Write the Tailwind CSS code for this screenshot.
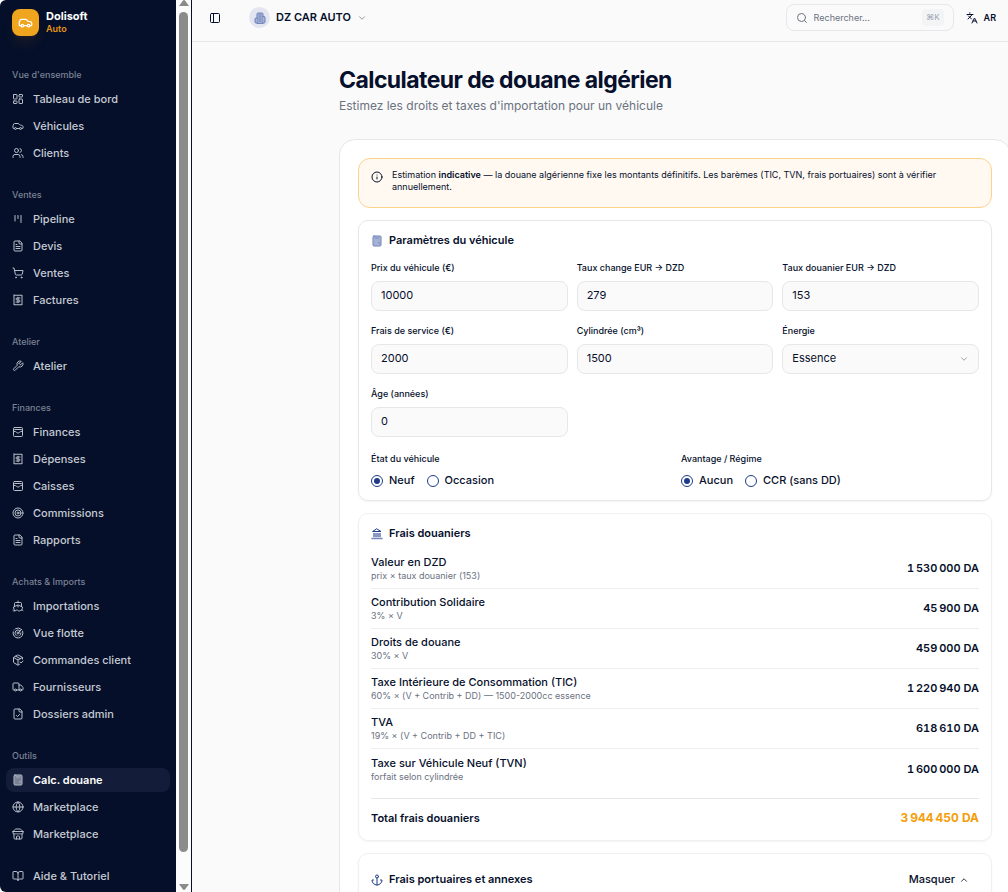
<!DOCTYPE html>
<html lang="fr">
<head>
    <meta charset="UTF-8">
    <meta name="viewport" content="width=device-width, initial-scale=1.0">
    <title>Dolisoft Auto - Calculateur de douane</title>
    <script src="https://cdn.jsdelivr.net/npm/@tailwindcss/browser@4"></script>
</head>
<body class="bg-[#fafafa] font-['Inter',sans-serif] text-[11px] leading-[15px] text-[#060f2b]">

    <div class="flex h-screen overflow-hidden">
        <aside class="flex w-48 shrink-0 border-r border-[#060f2b] bg-[#fcfcfc]">
            <div class="flex min-w-0 flex-1 flex-col gap-[18px] overflow-hidden rounded-l-md bg-[#050f2a] px-1.5">
                <a href="#" class="flex h-[45px] shrink-0 items-center gap-[7px] pl-1.5">
                    <span class="flex size-[27px] items-center justify-center rounded-lg bg-[#f0a51e] text-white shadow-lg shadow-[#f59e0b]/10">
                        <svg data-icon="car" class="size-[15px]"></svg>
                    </span>
                    <span class="flex flex-col">
                        <span class="leading-[13px] font-bold text-white">Dolisoft</span>
                        <span class="text-[9px] leading-3 font-semibold text-[#e5940f]">Auto</span>
                    </span>
                </a>
                <nav id="sidebar-nav" class="flex flex-col gap-[18px]"></nav>
            </div>
            <div class="flex w-[15px] shrink-0 flex-col items-center justify-between pb-0.5" aria-hidden="true">
                <svg viewBox="0 0 10 6" class="h-1.5 w-2.5 fill-[#8b8b8b]"><path d="M0 6 3.8.8q1.2-1.4 2.4 0L10 6z"/></svg>
                <div class="my-1.5 mb-8 w-[9px] flex-1 rounded-full bg-[#8b8b8b]"></div>
                <svg viewBox="0 0 10 6" class="h-1.5 w-2.5 fill-[#8b8b8b]"><path d="M0 0 3.8 5.2q1.2 1.4 2.4 0L10 0z"/></svg>
            </div>
        </aside>

        <div class="flex min-w-0 flex-1 flex-col">
            <header class="flex h-[42px] shrink-0 items-center justify-between border-b border-[#e5e7eb] pr-3 pb-1.5 pl-[17px]">
                <div class="flex items-center gap-7">
                    <button type="button" aria-label="Menu"><svg data-icon="panel" class="size-3"></svg></button>
                    <button type="button" class="flex items-center gap-1.5 font-semibold">
                        <span class="flex size-[21px] items-center justify-center rounded-full bg-[#e3e6f0] text-[#6b7fb8]">
                            <svg data-icon="building" class="size-3 fill-[#a9b5d8]"></svg>
                        </span>
                        DZ CAR AUTO
                        <svg data-icon="down" class="size-2.5 text-[#7b8294]"></svg>
                    </button>
                </div>
                <div class="flex items-center gap-3">
                    <label class="flex h-[27px] w-[168px] items-center gap-1.5 rounded-lg border border-[#e5e7eb] px-[9px] text-[#6b7280]">
                        <svg data-icon="search" class="size-3 shrink-0"></svg>
                        <input type="search" placeholder="Rechercher..." aria-label="Rechercher" class="w-0 flex-1 text-[9px] outline-none placeholder:text-[#6b7280]">
                        <kbd class="rounded bg-[#f3f4f6] px-1 py-px font-['Inter','DejaVu_Sans',sans-serif] text-[8px] text-[#9ca3af]">⌘K</kbd>
                    </label>
                    <button type="button" class="flex items-center gap-1.5 text-[9px] font-semibold">
                        <svg data-icon="languages" class="size-3"></svg>
                        AR
                    </button>
                </div>
            </header>

            <main class="flex-1 overflow-hidden pt-6 pl-[147px]">
                <h1 class="text-[23px] leading-7 font-bold tracking-tight">Calculateur de douane algérien</h1>
                <p class="mt-1 text-xs text-[#6b7280]">Estimez les droits et taxes d'importation pour un véhicule</p>

                <div class="mt-[25px] -mr-[3px] flex flex-col gap-3 rounded-2xl border border-[#e5e7eb] bg-white p-[18px]">
                    <div role="alert" class="flex gap-[9px] rounded-xl border border-[#fbd38a] bg-[#fff9f2] px-3 pt-2.5 pb-3.5 text-[9px] leading-3">
                        <svg data-icon="info" class="mt-0.5 size-3 shrink-0"></svg>
                        <p>Estimation <strong class="font-semibold">indicative</strong> — la douane algérienne fixe les montants définitifs. Les barèmes (TIC, TVN, frais portuaires) sont à vérifier annuellement.</p>
                    </div>

                    <section class="rounded-[10px] border border-[#e5e7eb] p-3 shadow-xs">
                        <h2 class="flex items-center gap-1.5 font-semibold">
                            <svg data-icon="calculator" class="size-3 fill-[#b4bfdd] text-[#6b7fb8]"></svg>
                            Paramètres du véhicule
                        </h2>
                        <div id="fields" class="mt-3.5 grid grid-cols-3 gap-x-[9px] gap-y-3.5"></div>
                        <div id="regimes" class="mt-4 grid grid-cols-2 gap-3"></div>
                    </section>

                    <section class="rounded-[10px] border border-[#f0f0f2] p-3 shadow-xs">
                        <h2 class="flex items-center gap-1.5 font-semibold">
                            <svg data-icon="landmark" class="size-3 text-[#1e3a8a]"></svg>
                            Frais douaniers
                        </h2>
                        <table class="mt-2 w-full border-separate border-spacing-0">
                            <tbody id="fees"></tbody>
                        </table>
                        <div class="mt-[9px] flex items-center justify-between border-t border-[#e5e7eb] pt-[9px] leading-5 font-semibold">
                            <span>Total frais douaniers</span>
                            <span class="text-xs leading-5 font-bold text-[#f59e0b] tabular-nums">3&#8239;944&#8239;450 DA</span>
                        </div>
                    </section>

                    <section class="rounded-[10px] border border-[#f0f0f2] p-3 shadow-xs">
                        <div class="flex h-[27px] items-center justify-between">
                            <h2 class="flex items-center gap-1.5 font-semibold">
                                <svg data-icon="anchor" class="size-3 text-[#1e3a8a]"></svg>
                                Frais portuaires et annexes
                            </h2>
                            <button type="button" class="flex items-center gap-1 pr-2.5 font-medium">
                                Masquer
                                <svg data-icon="up" class="size-2.5"></svg>
                            </button>
                        </div>
                    </section>
                </div>
            </main>
        </div>
    </div>

    <script>
        const icons = {
            dashboard: '<rect width="7" height="9" x="3" y="3" rx="1"/><rect width="7" height="5" x="14" y="3" rx="1"/><rect width="7" height="9" x="14" y="12" rx="1"/><rect width="7" height="5" x="3" y="16" rx="1"/>',
            car: '<path d="M19 17h2c.6 0 1-.4 1-1v-3c0-.9-.7-1.7-1.5-1.9C18.7 10.6 16 10 16 10s-1.3-1.4-2.2-2.3c-.5-.4-1.1-.7-1.8-.7H5c-.6 0-1.1.4-1.4.9l-1.4 2.9A3.7 3.7 0 0 0 2 12v4c0 .6.4 1 1 1h2"/><circle cx="7" cy="17" r="2"/><path d="M9 17h6"/><circle cx="17" cy="17" r="2"/>',
            users: '<path d="M16 21v-2a4 4 0 0 0-4-4H6a4 4 0 0 0-4 4v2"/><circle cx="9" cy="7" r="4"/><path d="M22 21v-2a4 4 0 0 0-3-3.87M16 3.13a4 4 0 0 1 0 7.75"/>',
            kanban: '<path d="M6 5v11M12 5v6M18 5v14"/>',
            file: '<path d="M15 2H6a2 2 0 0 0-2 2v16a2 2 0 0 0 2 2h12a2 2 0 0 0 2-2V7z"/><path d="M14 2v4a2 2 0 0 0 2 2h4M10 9H8M16 13H8M16 17H8"/>',
            cart: '<circle cx="8" cy="21" r="1"/><circle cx="19" cy="21" r="1"/><path d="M2.05 2.05h2l2.66 12.42a2 2 0 0 0 2 1.58h9.78a2 2 0 0 0 1.95-1.57l1.65-7.43H5.12"/>',
            receipt: '<path d="M4 2v20l2-1 2 1 2-1 2 1 2-1 2 1 2-1 2 1V2l-2 1-2-1-2 1-2-1-2 1-2-1-2 1Z"/><path d="M16 8h-6a2 2 0 1 0 0 4h4a2 2 0 1 1 0 4H8M12 17.5v-11"/>',
            wrench: '<path d="M14.7 6.3a1 1 0 0 0 0 1.4l1.6 1.6a1 1 0 0 0 1.4 0l3.77-3.77a6 6 0 0 1-7.94 7.94l-6.91 6.91a2.12 2.12 0 0 1-3-3l6.91-6.91a6 6 0 0 1 7.94-7.94l-3.76 3.76z"/>',
            wallet: '<rect width="18" height="18" x="3" y="3" rx="2"/><path d="M3 9a2 2 0 0 1 2-2h14a2 2 0 0 1 2 2"/><path d="M3 11h3c.8 0 1.6.3 2.1.9l1.1.9c1.6 1.6 4.1 1.6 5.7 0l1.1-.9c.5-.5 1.3-.9 2.1-.9H21"/>',
            target: '<circle cx="12" cy="12" r="10"/><circle cx="12" cy="12" r="6"/><circle cx="12" cy="12" r="2"/>',
            ship: '<path d="M12 10.189V14M12 2v3M19 13V7a2 2 0 0 0-2-2H7a2 2 0 0 0-2 2v6"/><path d="M19.38 20A11.6 11.6 0 0 0 21 14l-8.188-3.639a2 2 0 0 0-1.624 0L3 14a11.6 11.6 0 0 0 2.81 7.76"/><path d="M2 21c.6.5 1.2 1 2.5 1 2.5 0 2.5-2 5-2 1.3 0 1.9.5 2.5 1s1.2 1 2.5 1c2.5 0 2.5-2 5-2 1.3 0 1.9.5 2.5 1"/>',
            radar: '<path d="M19.07 4.93A10 10 0 0 0 6.99 3.34M4 6h.01M2.29 9.62A10 10 0 1 0 21.31 8.35M16.24 7.76A6 6 0 1 0 8.23 16.67M12 18h.01M17.99 11.66A6 6 0 0 1 15.77 16.67"/><circle cx="12" cy="12" r="2"/><path d="m13.41 10.59 5.66-5.66"/>',
            box: '<path d="m16 16 2 2 4-4"/><path d="M21 10V8a2 2 0 0 0-1-1.73l-7-4a2 2 0 0 0-2 0l-7 4A2 2 0 0 0 3 8v8a2 2 0 0 0 1 1.73l7 4a2 2 0 0 0 2 0l2-1.14M7.5 4.27l9 5.15M3.29 7 12 12l8.71-5M12 22V12"/>',
            truck: '<path d="M14 18V6a2 2 0 0 0-2-2H4a2 2 0 0 0-2 2v11a1 1 0 0 0 1 1h2M15 18H9M19 18h2a1 1 0 0 0 1-1v-3.65a1 1 0 0 0-.22-.624l-3.48-4.35A1 1 0 0 0 17.52 8H14"/><circle cx="17" cy="18" r="2"/><circle cx="7" cy="18" r="2"/>',
            fileCheck: '<path d="M15 2H6a2 2 0 0 0-2 2v16a2 2 0 0 0 2 2h12a2 2 0 0 0 2-2V7z"/><path d="M14 2v4a2 2 0 0 0 2 2h4M9 15l2 2 4-4"/>',
            calculator: '<rect width="16" height="20" x="4" y="2" rx="2"/><path d="M8 6h8M16 14v4M16 10h.01M12 10h.01M8 10h.01M12 14h.01M8 14h.01M12 18h.01M8 18h.01"/>',
            globe: '<circle cx="12" cy="12" r="10"/><path d="M12 2a14.5 14.5 0 0 0 0 20 14.5 14.5 0 0 0 0-20M2 12h20"/>',
            store: '<path d="m2 7 4.41-4.41A2 2 0 0 1 7.83 2h8.34a2 2 0 0 1 1.42.59L22 7M4 12v8a2 2 0 0 0 2 2h12a2 2 0 0 0 2-2v-8M15 22v-4a2 2 0 0 0-2-2h-2a2 2 0 0 0-2 2v4M2 7h20"/><path d="M22 7v3a2 2 0 0 1-2 2 2.7 2.7 0 0 1-1.59-.63.7.7 0 0 0-.82 0A2.7 2.7 0 0 1 16 12a2.7 2.7 0 0 1-1.59-.63.7.7 0 0 0-.82 0A2.7 2.7 0 0 1 12 12a2.7 2.7 0 0 1-1.59-.63.7.7 0 0 0-.82 0A2.7 2.7 0 0 1 8 12a2.7 2.7 0 0 1-1.59-.63.7.7 0 0 0-.82 0A2.7 2.7 0 0 1 4 12a2 2 0 0 1-2-2V7"/>',
            book: '<path d="M12 7v14M3 18a1 1 0 0 1-1-1V4a1 1 0 0 1 1-1h5a4 4 0 0 1 4 4 4 4 0 0 1 4-4h5a1 1 0 0 1 1 1v13a1 1 0 0 1-1 1h-6a3 3 0 0 0-3 3 3 3 0 0 0-3-3z"/>',
            panel: '<rect width="18" height="18" x="3" y="3" rx="2"/><path d="M9 3v18"/>',
            building: '<path d="M6 22V4a2 2 0 0 1 2-2h8a2 2 0 0 1 2 2v18Z"/><path d="M6 12H4a2 2 0 0 0-2 2v6a2 2 0 0 0 2 2h2M18 9h2a2 2 0 0 1 2 2v9a2 2 0 0 1-2 2h-2M10 6h4M10 10h4M10 14h4M10 18h4"/>',
            search: '<circle cx="11" cy="11" r="8"/><path d="m21 21-4.3-4.3"/>',
            languages: '<path d="m5 8 6 6M4 14l6-6 2-3M2 5h12M7 2h1M22 22l-5-10-5 10M14 18h6"/>',
            info: '<circle cx="12" cy="12" r="10"/><path d="M12 16v-4M12 8h.01"/>',
            landmark: '<path d="m12 2 8 5H4z"/><path d="M4 10h16v8H4z" fill="currentColor" stroke="none" opacity=".4"/><path d="M6 18v-7M10 18v-7M14 18v-7M18 18v-7" opacity=".4"/><path d="M2 21h20" stroke-width="3" opacity=".6"/>',
            anchor: '<path d="M12 22V8M5 12H2a10 10 0 0 0 20 0h-3"/><circle cx="12" cy="5" r="3"/>',
            down: '<path d="m6 9 6 6 6-6"/>',
            up: '<path d="m18 15-6-6-6 6"/>',
        };

        const navGroups = [
            { title: "Vue d'ensemble", items: [['dashboard', 'Tableau de bord'], ['car', 'Véhicules'], ['users', 'Clients']] },
            { title: 'Ventes', items: [['kanban', 'Pipeline'], ['file', 'Devis'], ['cart', 'Ventes'], ['receipt', 'Factures']] },
            { title: 'Atelier', items: [['wrench', 'Atelier']] },
            { title: 'Finances', items: [['wallet', 'Finances'], ['receipt', 'Dépenses'], ['wallet', 'Caisses'], ['target', 'Commissions'], ['file', 'Rapports']] },
            { title: 'Achats &amp; Imports', items: [['ship', 'Importations'], ['radar', 'Vue flotte'], ['box', 'Commandes client'], ['truck', 'Fournisseurs'], ['fileCheck', 'Dossiers admin']] },
            { title: 'Outils', items: [['calculator', 'Calc. douane'], ['globe', 'Marketplace'], ['store', 'Marketplace']] },
            { title: '', items: [['book', 'Aide &amp; Tutoriel']] },
        ];

        const fields = [
            { id: 'prix', label: 'Prix du véhicule (€)', value: 10000 },
            { id: 'taux-change', label: 'Taux change EUR → DZD', value: 279 },
            { id: 'taux-douanier', label: 'Taux douanier EUR → DZD', value: 153 },
            { id: 'frais-service', label: 'Frais de service (€)', value: 2000 },
            { id: 'cylindree', label: 'Cylindrée (cm³)', value: 1500 },
            { id: 'energie', label: 'Énergie', options: ['Essence', 'Diesel'] },
            { id: 'age', label: 'Âge (années)', value: 0 },
        ];

        const regimes = [
            { name: 'etat', label: 'État du véhicule', options: ['Neuf', 'Occasion'] },
            { name: 'regime', label: 'Avantage / Régime', options: ['Aucun', 'CCR (sans DD)'] },
        ];

        const fees = [
            { name: 'Valeur en DZD', detail: 'prix × taux douanier (153)', amount: 1530000 },
            { name: 'Contribution Solidaire', detail: '3% × V', amount: 45900 },
            { name: 'Droits de douane', detail: '30% × V', amount: 459000 },
            { name: 'Taxe Intérieure de Consommation (TIC)', detail: '60% × (V + Contrib + DD) — 1500-2000cc essence', amount: 1220940 },
            { name: 'TVA', detail: '19% × (V + Contrib + DD + TIC)', amount: 618610 },
            { name: 'Taxe sur Véhicule Neuf (TVN)', detail: 'forfait selon cylindrée', amount: 1600000 },
        ];

        const formatAmount = n => String(n).replace(/\B(?=(\d{3})+$)/g, '\u202f') + ' DA';

        document.getElementById('sidebar-nav').innerHTML = navGroups.map(group => `
            <div>
                ${group.title ? `<h3 class="flex h-6 items-center pb-0.5 pl-1.5 text-[9px] font-medium text-[#7b8294]">${group.title}</h3>` : ''}
                <ul class="flex flex-col gap-[3px]">
                    ${group.items.map(([icon, label]) => {
                        const active = label === 'Calc. douane';
                        const state = active ? 'bg-[#131d39] font-semibold text-white' : 'font-medium text-[#c6cad3]';
                        return `<li><a href="#" class="flex h-6 items-center gap-[9px] rounded-lg pl-1.5 ${state}"><svg data-icon="${icon}" class="size-3 text-[#b9bec9] ${active ? 'fill-[#6b7388]' : ''}"></svg>${label}</a></li>`;
                    }).join('')}
                </ul>
            </div>`).join('');

        document.getElementById('fields').innerHTML = fields.map(field => `
            <div class="flex flex-col gap-[7px]">
                <label for="${field.id}" class="text-[9px] leading-3 font-medium">${field.label}</label>
                ${field.options
                    ? `<div class="relative">
                        <select id="${field.id}" class="block h-[30px] w-full appearance-none rounded-lg border border-[#e5e7eb] bg-[#fafafa] px-[9px] pb-0.5">${field.options.map(o => `<option>${o}</option>`).join('')}</select>
                        <svg data-icon="down" class="pointer-events-none absolute top-2.5 right-2.5 size-2.5 text-[#8b909c]"></svg>
                    </div>`
                    : `<input id="${field.id}" type="number" value="${field.value}" class="h-[30px] w-full rounded-lg border border-[#e5e7eb] bg-[#fafafa] px-[9px] pb-0.5">`}
            </div>`).join('');

        document.getElementById('regimes').innerHTML = regimes.map(group => `
            <fieldset>
                <legend class="text-[9px] leading-3 font-medium">${group.label}</legend>
                <div class="mt-2 flex gap-3">
                    ${group.options.map((option, i) => `
                        <label class="flex items-center gap-1.5 font-medium">
                            <input type="radio" name="${group.name}" ${i === 0 ? 'checked' : ''} class="size-3 appearance-none rounded-full border border-[#1e3a8a] bg-white bg-clip-content p-0.5 checked:bg-[#1e3a8a]">
                            ${option}
                        </label>`).join('')}
                </div>
            </fieldset>`).join('');

        document.getElementById('fees').innerHTML = fees.map((fee, i) => {
            const border = i < fees.length - 1 ? 'border-b border-[#eeeff1]' : '';
            return `
            <tr class="h-10">
                <th scope="row" class="${border} text-left align-middle font-medium">
                    ${fee.name}
                    <span class="block text-[9px] leading-3 font-normal text-[#6b7280]">${fee.detail}</span>
                </th>
                <td class="${border} text-right align-middle font-semibold tabular-nums">${formatAmount(fee.amount)}</td>
            </tr>`;
        }).join('');

        document.querySelectorAll('svg[data-icon]').forEach(svg => {
            svg.setAttribute('viewBox', '0 0 24 24');
            svg.setAttribute('stroke', 'currentColor');
            svg.setAttribute('stroke-width', '2');
            svg.setAttribute('stroke-linecap', 'round');
            svg.setAttribute('stroke-linejoin', 'round');
            svg.setAttribute('fill', 'none');
            svg.setAttribute('aria-hidden', 'true');
            svg.innerHTML = icons[svg.dataset.icon];
        });
    </script>
</body>
</html>
